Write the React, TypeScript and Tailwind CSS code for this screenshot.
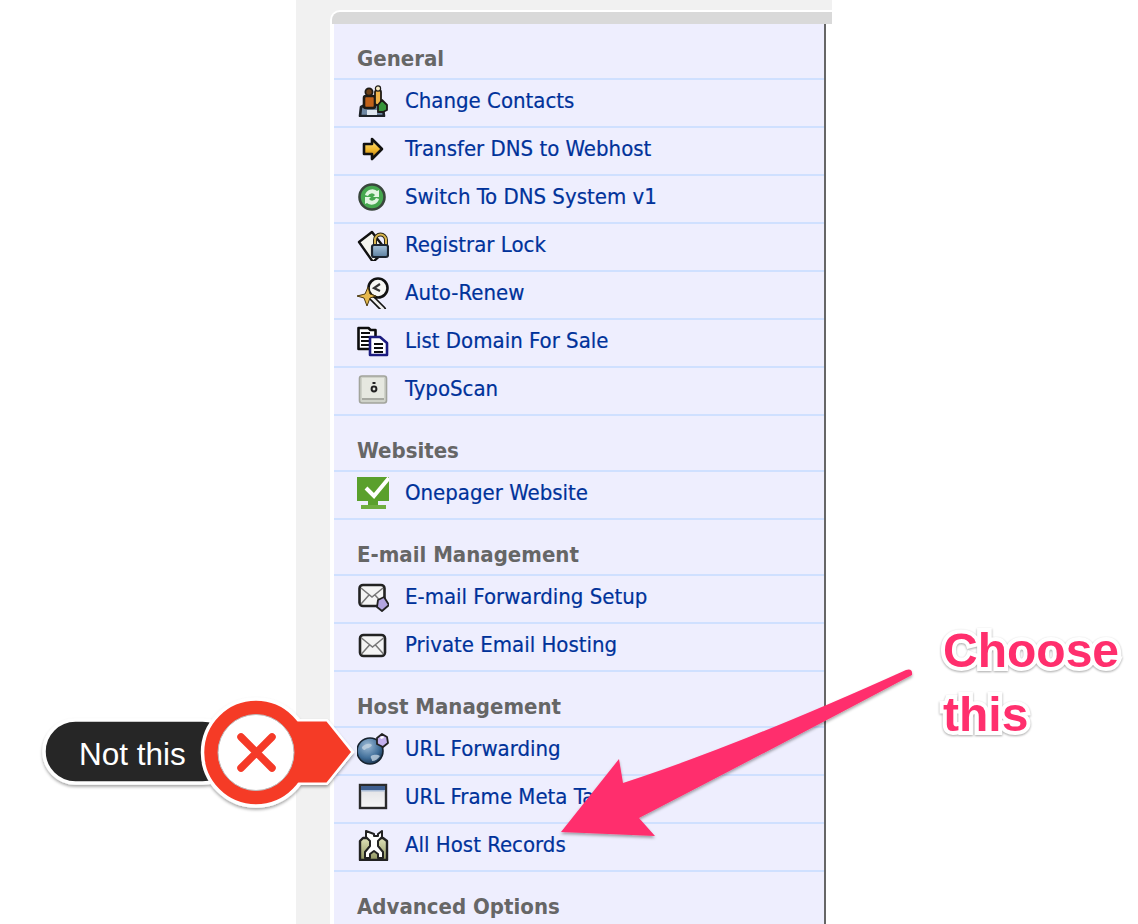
import React from 'react';

const ContactsIcon = () => (
  <svg viewBox="0 0 32 32" className="h-8 w-8 blur-[0.6px]">
    <path d="M3 31l1-9 6-3 11 0 5 4 1 8z" fill="#6f88a3" stroke="#1d2228" strokeWidth="2.6" strokeLinejoin="round" />
    <rect x="7" y="11" width="11" height="12" rx="2" fill="#c0611a" stroke="#1d1a16" strokeWidth="2.6" />
    <circle cx="12" cy="7" r="3.6" fill="#6b3f18" stroke="#1d1a16" strokeWidth="1.8" />
    <rect x="18" y="5" width="6" height="15" rx="2" fill="#f0b44a" stroke="#1d1a16" strokeWidth="1.8" />
    <circle cx="21" cy="3.5" r="2.6" fill="#f7ebc4" stroke="#1d1a16" strokeWidth="1.2" />
    <path d="M21 20l4-5 5 5 0 5-4 2h-5z" fill="#36953a" stroke="#1d1a16" strokeWidth="1.8" strokeLinejoin="round" />
    <rect x="10" y="25" width="10" height="5" fill="#dfe6ee" />
  </svg>
);

const ArrowIcon = () => (
  <svg viewBox="0 0 32 32" className="h-8 w-8 blur-[0.5px]">
    <defs>
      <linearGradient id="arrowFill" x1="0" y1="0" x2="0" y2="1">
        <stop offset="0" stopColor="#fbe48a" />
        <stop offset="0.55" stopColor="#f2b72a" />
        <stop offset="1" stopColor="#a06a10" />
      </linearGradient>
    </defs>
    <path d="M7 11h8V6l10 10-10 10v-5H7z" fill="url(#arrowFill)" stroke="#111" strokeWidth="2.6" strokeLinejoin="round" />
  </svg>
);

const SwitchIcon = () => (
  <svg viewBox="0 0 32 32" className="h-8 w-8 blur-[0.6px]">
    <circle cx="15" cy="16" r="12.5" fill="#46a84f" stroke="#39463c" strokeWidth="2.6" />
    <path d="M8 14a7.5 7.5 0 0 1 12-4l2-1v7h-6l2-2a4 4 0 0 0-7 1z" fill="#e2f5e2" />
    <path d="M22 18a7.5 7.5 0 0 1-12 4l-2 1v-7h6l-2 2a4 4 0 0 0 7-1z" fill="#e2f5e2" />
  </svg>
);

const LockIcon = () => (
  <svg viewBox="0 0 32 32" className="h-8 w-8 blur-[0.6px]">
    <defs>
      <linearGradient id="lockFill" x1="0" y1="0" x2="0" y2="1">
        <stop offset="0" stopColor="#a8c4dc" />
        <stop offset="1" stopColor="#5b7f9f" />
      </linearGradient>
    </defs>
    <path d="M2 13L15 3l14 18-13 12z" fill="#f5f5ee" stroke="#111" strokeWidth="2.400" strokeLinejoin="round" />
    <path d="M18 17v-6a5.500 5.500 0 0 1 11 0v6" fill="none" stroke="#2a2618" strokeWidth="4" />
    <path d="M18 17v-6a5.500 5.500 0 0 1 11 0v6" fill="none" stroke="#d9b64e" strokeWidth="2" />
    <rect x="15" y="16" width="16" height="12" rx="2" fill="url(#lockFill)" stroke="#1c2530" strokeWidth="2.200" />
  </svg>
);

const RenewIcon = () => (
  <svg viewBox="0 0 32 32" className="h-8 w-8 blur-[0.6px]">
    <path d="M13 19l13 13" stroke="#111" strokeWidth="6" strokeLinecap="round" />
    <path d="M13 19l13 13" stroke="#eee" strokeWidth="2.600" strokeLinecap="round" />
    <circle cx="21" cy="11" r="9.500" fill="#f7f7f4" stroke="#111" strokeWidth="2.600" />
    <path d="M23 7l-6 4 6 3" fill="none" stroke="#333" strokeWidth="2.200" />
    <path d="M0 19l8-2 3-7 2 7 6 2-6 2-3 8-3-8z" fill="#e6b94e" stroke="#4a3810" strokeWidth="1" strokeLinejoin="round" />
  </svg>
);

const ListIcon = () => (
  <svg viewBox="0 0 32 32" className="h-8 w-8 blur-[0.3px]">
    <path d="M1.500 3h10l2 2h5v19H1.500z" fill="#fff" stroke="#0c0c0c" strokeWidth="2.600" strokeLinejoin="round" />
    <path d="M4 8h9M4 12h8M4 16h8M4 20h8" stroke="#0c0c0c" strokeWidth="2" />
    <path d="M13 12h10l7 6v12H13z" fill="#fff" stroke="#1c1c80" strokeWidth="2.600" strokeLinejoin="round" />
    <path d="M17 19h9M17 23h9M17 27h9" stroke="#0c0c0c" strokeWidth="2" />
  </svg>
);

const TypoIcon = () => (
  <svg viewBox="0 0 32 32" className="h-8 w-8 blur-[0.5px]">
    <rect x="2.500" y="3" width="27" height="27" rx="2.500" fill="#cfd2c9" stroke="#a2a49c" strokeWidth="1.600" />
    <rect x="5" y="5" width="22" height="20" fill="#e6e8e0" />
    <path d="M5 26h22" stroke="#a7a9a1" strokeWidth="2" />
    <circle cx="17" cy="16" r="2.400" fill="none" stroke="#222" strokeWidth="2" />
    <path d="M15.500 10h3" stroke="#222" strokeWidth="2" />
  </svg>
);

const OnepagerIcon = () => (
  <svg viewBox="0 0 32 32" className="h-8 w-8">
    <rect x="0" y="0" width="32" height="24" fill="#5aa02c" />
    <rect x="11" y="24" width="10" height="4" fill="#5aa02c" />
    <rect x="4" y="28" width="25" height="4" fill="#6fae3f" />
    <path d="M9 11l8 8L32 1" fill="none" stroke="#fff" strokeWidth="4" />
  </svg>
);

const MailForwardIcon = () => (
  <svg viewBox="0 0 32 32" className="h-8 w-8 blur-[0.5px]">
    <rect x="2.500" y="4" width="25" height="21" rx="3.500" fill="#f4f4f4" stroke="#222" strokeWidth="2.600" />
    <path d="M4 7l11 9 11-9M4 23l8-9M26 23l-8-9" fill="none" stroke="#777" strokeWidth="1.500" />
    <path d="M21 19l6-3 5 8-7 6-5-4z" fill="#b3a5e0" stroke="#222" strokeWidth="1.800" strokeLinejoin="round" />
  </svg>
);

const MailIcon = () => (
  <svg viewBox="0 0 32 32" className="h-8 w-8 blur-[0.5px]">
    <rect x="3" y="6" width="25" height="21" rx="3.500" fill="#f4f4f4" stroke="#222" strokeWidth="2.600" />
    <path d="M4.500 9l11 9 11-9M4.500 25l8-9M26.500 25l-8-9" fill="none" stroke="#777" strokeWidth="1.500" />
  </svg>
);

const GlobeIcon = () => (
  <svg viewBox="0 0 32 32" className="h-8 w-8 blur-[0.5px]">
    <defs>
      <radialGradient id="globeFill" cx="0.4" cy="0.3" r="0.8">
        <stop offset="0" stopColor="#9dbbd6" />
        <stop offset="0.6" stopColor="#3f6d98" />
        <stop offset="1" stopColor="#12243a" />
      </radialGradient>
    </defs>
    <circle cx="13" cy="18" r="13" fill="url(#globeFill)" stroke="#16222e" strokeWidth="1.600" />
    <path d="M5 14c4-4 8-4 10-2-2 4-5 2-7 5-2 0-3-1-3-3zM14 23c4-2 7-1 9 0-2 3-5 5-8 5 0-3-2-3-1-5z" fill="#c2d2e0" opacity="0.8" />
    <path d="M20 5l5-4 5 3 1 6-5 4-6-3z" fill="#c4b0ee" stroke="#222" strokeWidth="1.800" strokeLinejoin="round" />
    <path d="M23 4l3-1 1 2-3 1z" fill="#fff" />
  </svg>
);

const FrameIcon = () => (
  <svg viewBox="0 0 32 32" className="h-8 w-8 blur-[0.3px]">
    <defs>
      <linearGradient id="frameFill" x1="0" y1="0" x2="0" y2="1">
        <stop offset="0" stopColor="#dfdfe2" />
        <stop offset="1" stopColor="#f7f7f7" />
      </linearGradient>
    </defs>
    <rect x="3" y="4" width="26" height="23" fill="url(#frameFill)" stroke="#2b2b2b" strokeWidth="2.400" />
    <rect x="4" y="5" width="24" height="4" fill="#3f5f8f" />
    <rect x="4" y="9" width="24" height="1.500" fill="#a9bcd6" />
  </svg>
);

const HostIcon = () => (
  <svg viewBox="0 0 32 32" className="h-8 w-8 blur-[0.5px]">
    <defs>
      <linearGradient id="hostFill" x1="0" y1="0" x2="0" y2="1">
        <stop offset="0" stopColor="#dfe2b8" />
        <stop offset="1" stopColor="#8f9560" />
      </linearGradient>
    </defs>
    <path d="M3 12l3-3h20l4 3v19H3z" fill="url(#hostFill)" stroke="#222" strokeWidth="2.400" strokeLinejoin="round" />
    <path d="M9 2v6l4 4v5l-5 6v6h5v-4l4-3 4 3v4h5v-6l-5-6v-5l4-4V2l-4 3v2h-4V5z" fill="#fff" stroke="#222" strokeWidth="2" strokeLinejoin="round" />
  </svg>
);

type Item = { label: string; icon: React.ReactNode };

const sections: { title: string; items: Item[] }[] = [
  {
    title: 'General',
    items: [
      { label: 'Change Contacts', icon: <ContactsIcon /> },
      { label: 'Transfer DNS to Webhost', icon: <ArrowIcon /> },
      { label: 'Switch To DNS System v1', icon: <SwitchIcon /> },
      { label: 'Registrar Lock', icon: <LockIcon /> },
      { label: 'Auto-Renew', icon: <RenewIcon /> },
      { label: 'List Domain For Sale', icon: <ListIcon /> },
      { label: 'TypoScan', icon: <TypoIcon /> },
    ],
  },
  { title: 'Websites', items: [{ label: 'Onepager Website', icon: <OnepagerIcon /> }] },
  {
    title: 'E-mail Management',
    items: [
      { label: 'E-mail Forwarding Setup', icon: <MailForwardIcon /> },
      { label: 'Private Email Hosting', icon: <MailIcon /> },
    ],
  },
  {
    title: 'Host Management',
    items: [
      { label: 'URL Forwarding', icon: <GlobeIcon /> },
      { label: 'URL Frame Meta Tags', icon: <FrameIcon /> },
      { label: 'All Host Records', icon: <HostIcon /> },
    ],
  },
  { title: 'Advanced Options', items: [] },
];

export default function App() {
  return (
    <div className="relative h-[924px] w-[1138px] overflow-hidden bg-white">
      {/* Page column */}
      <div className="ml-[296px] h-full w-[536px] bg-[#f1f1f1] pl-[34px] pt-[10px]">
        <div className="h-full rounded-tl-[10px] bg-white pl-[2px] pt-[2px]">
          <div className="h-[12px] rounded-tl-[8px] bg-[#d9d9d9]" />
          <div className="flex h-full">
            <div className="ml-[2px] h-full w-[492px] border-r-2 border-[#666] bg-[#eeeefe]">
              {sections.map((section) => (
                <div key={section.title}>
                  <div className="flex h-[56px] items-end border-b-2 border-[#cfe0ff] pb-[4px] pl-[23px]">
                    <span className="font-['DejaVu_Sans_Condensed','DejaVu_Sans',sans-serif] text-[22px] font-bold leading-[30px] text-[#666]">
                      {section.title}
                    </span>
                  </div>
                  {section.items.map((item) => (
                    <div key={item.label} className="flex h-[48px] items-center border-b-2 border-[#cfe0ff] pb-[4px] pl-[23px]">
                      <span className="flex h-8 w-8 shrink-0 items-center justify-center">{item.icon}</span>
                      <span className="ml-[16px] font-['DejaVu_Sans_Condensed','DejaVu_Sans',sans-serif] text-[22px] leading-[30px] text-[#00329a] [-webkit-text-stroke:0.2px_#00329a]">
                        {item.label}
                      </span>
                    </div>
                  ))}
                </div>
              ))}
            </div>
          </div>
        </div>
      </div>

      {/* Annotations */}
      <svg viewBox="0 0 1138 924" className="absolute left-0 top-0 h-[924px] w-[1138px]">
        <defs>
          <filter id="soft" x="-20%" y="-20%" width="140%" height="140%">
            <feDropShadow dx="0" dy="2" stdDeviation="1.500" floodColor="#000" floodOpacity="0.35" />
          </filter>
        </defs>
        <g filter="url(#soft)">
          <path d="M561 832L619 759 L623 783 Q740 745 906 670 Q913 668 912 675 Q780 745 639 818 L655 836z" fill="#ff2f6d" />
        </g>
        <g filter="url(#soft)">
          <rect x="44" y="720" width="190" height="63" rx="31.500" fill="#262626" stroke="#fff" strokeWidth="3.500" />
          <path d="M290 719.500H327.500L354 752 327.500 784.500H290z" fill="#fff" stroke="#fff" strokeWidth="1" strokeLinejoin="round" />
          <circle cx="256" cy="752.500" r="53.500" fill="#f53a28" stroke="#fff" strokeWidth="3.500" />
          <path d="M296 721.500H326.500L351 752 326.500 782.500H296z" fill="#f53a28" />
          <circle cx="256" cy="752.500" r="38" fill="#fff" stroke="#bbb" strokeWidth="1" />
        </g>
        <path d="M241 737L272 768M272 737L241 768" stroke="#f53a28" strokeWidth="7.500" strokeLinecap="round" />
      </svg>
      <span className="absolute left-[79px] top-[735px] font-['Liberation_Sans'] text-[31.500px] leading-[38px] text-white">
        Not this
      </span>
      <div className="absolute left-[943px] top-[619px] font-['Liberation_Sans'] text-[48px] font-bold leading-[64px] text-[#ff2f6d] [-webkit-text-stroke:8px_white] [paint-order:stroke_fill] [filter:drop-shadow(0_1px_1px_rgba(0,0,0,0.35))]">
        <div>Choose</div>
        <div>this</div>
      </div>
    </div>
  );
}
